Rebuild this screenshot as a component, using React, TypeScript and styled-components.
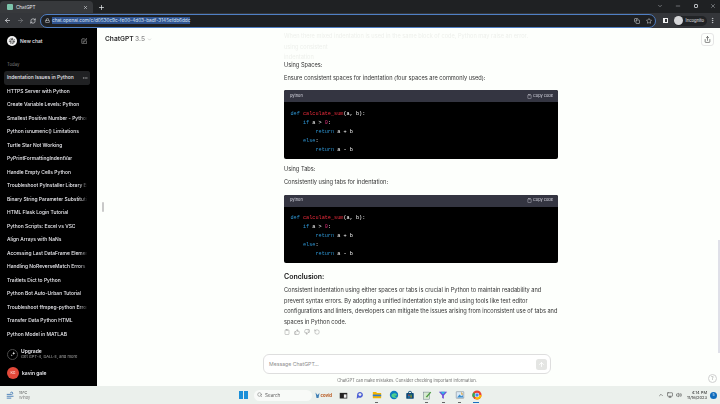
import styled, { createGlobalStyle } from "styled-components"
import {
  ArrowLeft,
  ArrowRight,
  ArrowUp,
  ChevronDown,
  ChevronUp,
  Clipboard,
  Copy,
  EllipsisVertical,
  Ellipsis,
  Lock,
  Minus,
  Monitor,
  Plus,
  RefreshCw,
  RotateCcw,
  Search,
  Share,
  SquarePen,
  Star,
  ThumbsDown,
  ThumbsUp,
  Volume2,
  X,
} from "lucide-react"

const GlobalStyle = createGlobalStyle`
  html, body {
    margin: 0;
    padding: 0;
    width: 720px;
    height: 404px;
    overflow: hidden;
    background: #fdfffc;
  }
  * {
    box-sizing: border-box;
  }
`

const Screen = styled.div`
  width: 720px;
  height: 404px;
  display: flex;
  flex-direction: column;
  overflow: hidden;
  font-family: Inter, "Liberation Sans", sans-serif;
  filter: blur(0.35px);
`

/* browser chrome */
const TabStrip = styled.div`
  height: 13px;
  flex: none;
  background: #1f2123;
  display: flex;
  align-items: flex-end;
  color: #e8eaed;
`

const Tab = styled.div`
  width: 93px;
  height: 12px;
  background: #37393c;
  border-radius: 4px 4px 0 0;
  display: flex;
  align-items: center;
  padding: 0 5px 0 7px;
  gap: 3px;
  font-size: 4.6px;
`

const Favicon = styled.span`
  width: 6px;
  height: 6px;
  border-radius: 1px;
  background: #7cc4ab;
  flex: none;
`

const TabTitle = styled.span`
  flex: 1;
`

const NewTab = styled.div`
  width: 15px;
  margin-left: 1px;
  height: 12px;
  display: flex;
  align-items: center;
  justify-content: center;
`

const WindowControls = styled.div`
  margin-left: auto;
  height: 11px;
  display: flex;
  align-items: center;
  gap: 12.5px;
  padding-right: 4px;
  align-self: flex-start;
  color: #b9bcc0;
`

const RestoreGlyph = styled.span`
  width: 4px;
  height: 4px;
  border: 1px solid #b9bcc0;
  border-radius: 1px;
`

const Toolbar = styled.div`
  height: 15px;
  flex: none;
  background: #34363a;
  display: flex;
  align-items: center;
  padding: 0 4px 0 4px;
  color: #dfe1e5;
`

const NavButtons = styled.div`
  display: flex;
  align-items: center;
  gap: 6px;
  width: 36px;
`

const Omnibox = styled.div`
  width: 616px;
  height: 14px;
  border: 1px solid #4f7fc4;
  border-radius: 7px;
  background: #1e2023;
  display: flex;
  align-items: center;
  padding: 0 3.5px 0 4px;
  gap: 2px;
`

const UrlText = styled.span`
  background: #2f5390;
  color: #dce6f5;
  font-size: 4.7px;
  line-height: 7px;
  white-space: nowrap;
`

const OmniIcons = styled.div`
  margin-left: auto;
  display: flex;
  align-items: center;
  gap: 6px;
`

const ToolbarRight = styled.div`
  flex: 1;
  display: flex;
  align-items: center;
  justify-content: flex-end;
  gap: 2px;
`

const SidePanelGlyph = styled.span`
  width: 5px;
  height: 5px;
  background: #34363a;
  border: 1px solid #f1f1f1;
  border-left-width: 2.5px;
  margin-right: 4px;
`

const IncognitoPill = styled.div`
  display: flex;
  align-items: center;
  gap: 3px;
  height: 10px;
  background: #212326;
  border-radius: 5px;
  font-size: 4.2px;
  color: #e8eaed;
  padding-right: 3px;
`

const IncognitoAvatar = styled.span`
  width: 9px;
  height: 9px;
  border-radius: 50%;
  background: #d6d7d9;
`

/* app */
const Body = styled.div`
  flex: 1;
  min-height: 0;
  display: flex;
`

const Sidebar = styled.aside`
  width: 97px;
  flex: none;
  background: #000;
  display: flex;
  flex-direction: column;
  color: #ececf1;
  padding: 6px 7px 0 4px;
`

const NewChatRow = styled.div`
  display: flex;
  align-items: center;
  height: 14px;
  padding: 0 3px;
  gap: 3px;
  font-size: 5px;
  font-weight: 500;
  margin-bottom: 14px;
`

const LogoCircle = styled.span`
  width: 10px;
  height: 10px;
  border-radius: 50%;
  background: #f3f3f3;
  display: flex;
  align-items: center;
  justify-content: center;
  flex: none;
`

const NewChatIcon = styled.span`
  margin-left: auto;
  display: flex;
  color: #c8c8c8;
`

const DayLabel = styled.div`
  font-size: 4.3px;
  color: #7f7f7f;
  padding: 0 3px;
  height: 6px;
  line-height: 6px;
  margin-bottom: 3px;
`

const ChatList = styled.div`
  display: flex;
  flex-direction: column;
`

const ChatItem = styled.div<{ $active?: boolean }>`
  height: 13.5px;
  line-height: 13.5px;
  padding: 0 3px;
  font-size: 4.95px;
  font-weight: 500;
  color: #ececf1;
  white-space: nowrap;
  position: relative;
  overflow: hidden;
  border-radius: 3px;
  background: ${(p) => (p.$active ? "#202123" : "transparent")};
  -webkit-mask-image: ${(p) =>
    p.$active ? "none" : "linear-gradient(to right, #000 88%, transparent 97%)"};
`

const ItemDots = styled.span`
  position: absolute;
  right: 0;
  top: 0;
  bottom: 0;
  width: 14px;
  display: flex;
  align-items: center;
  justify-content: flex-end;
  padding-right: 2px;
  background: linear-gradient(to right, transparent, #202123 35%);
  color: #b8b8b8;
`

const SidebarFooter = styled.div`
  margin-top: auto;
  padding: 0 3px 7px;
  display: flex;
  flex-direction: column;
  gap: 7px;
`

const UpgradeRow = styled.div`
  display: flex;
  align-items: center;
  gap: 3px;
`

const UpgradeBadge = styled.span`
  width: 11px;
  height: 11px;
  border-radius: 50%;
  border: 0.5px solid #4a4a4a;
  display: flex;
  align-items: center;
  justify-content: center;
  flex: none;
`

const UpgradeText = styled.div`
  display: flex;
  flex-direction: column;
  font-size: 5px;
  font-weight: 600;
  line-height: 6px;
`

const UpgradeSub = styled.span`
  font-size: 4.05px;
  font-weight: 400;
  color: #a8a8a8;
  white-space: nowrap;
`

const UserRow = styled.div`
  display: flex;
  align-items: center;
  gap: 3px;
  font-size: 5px;
  font-weight: 600;
`

const Avatar = styled.span`
  width: 12px;
  height: 12px;
  border-radius: 50%;
  background: #e2493a;
  color: #f8c8c0;
  font-size: 3.6px;
  display: flex;
  align-items: center;
  justify-content: center;
  flex: none;
`

const Main = styled.main`
  flex: 1;
  min-width: 0;
  position: relative;
  background: #fdfffc;
  display: flex;
  flex-direction: column;
`

const Header = styled.header`
  position: absolute;
  top: 0;
  left: 0;
  right: 0;
  height: 22px;
  display: flex;
  align-items: center;
  padding: 0 6px 0 8px;
  z-index: 2;
`

const ModelName = styled.div`
  font-size: 6.6px;
  font-weight: 600;
  color: #2a2a2a;
  display: flex;
  align-items: center;
  gap: 1.5px;
`

const ModelVersion = styled.span`
  color: #8a8a8a;
  font-weight: 500;
`

const ShareButton = styled.div`
  margin-left: auto;
  width: 13px;
  height: 13px;
  border: 0.5px solid #e6e6e6;
  border-radius: 3px;
  display: flex;
  align-items: center;
  justify-content: center;
  color: #333;
`

const SideHandle = styled.span`
  position: absolute;
  left: 5px;
  top: 174px;
  width: 2px;
  height: 10px;
  border-radius: 1px;
  background: #c9c9c9;
`

const ScrollThumb = styled.span`
  position: absolute;
  right: 0;
  top: 212px;
  width: 2.5px;
  height: 113px;
  background: #dfe0e8;
`

const Thread = styled.div`
  flex: 1;
  min-height: 0;
  overflow: hidden;
  padding: 3px 162px 0 187px;
  font-size: 5.65px;
  line-height: 10.6px;
  color: #333;
`

const FadedLine = styled.div<{ $height?: number }>`
  white-space: nowrap;
  height: ${(p) => p.$height ?? 10.6}px;
  color: #eef0ec;
`

const Para = styled.p<{ $gap?: number }>`
  margin: 0 0 ${(p) => p.$gap ?? 2}px;
  white-space: nowrap;
`

const CodeBlock = styled.div<{ $after?: number }>`
  height: 68.5px;
  background: #000;
  border-radius: 2px;
  overflow: hidden;
  margin: 7px 0 ${(p) => p.$after ?? 5.5}px;
`

const CodeHeader = styled.div`
  height: 12px;
  background: #343541;
  color: #d9d9e3;
  font-size: 3.9px;
  display: flex;
  align-items: center;
  justify-content: space-between;
  padding: 0 5px 0 6px;
`

const CopyLabel = styled.span`
  display: flex;
  align-items: center;
  gap: 1.5px;
`

const Code = styled.pre`
  margin: 0;
  padding: 7.5px 6.5px 0;
  font-family: "Liberation Mono", "DejaVu Sans Mono", monospace;
  font-size: 5.2px;
  line-height: 9.05px;
  color: #fff;
`

const Kw = styled.span`
  color: #2e95d3;
`

const Fn = styled.span`
  color: #f22c3d;
`

const Num = styled.span`
  color: #df3079;
`

const Heading = styled.h3`
  margin: 0 0 3.5px;
  font-size: 7px;
  line-height: 11px;
  font-weight: 600;
  color: #111;
`

const ActionRow = styled.div`
  display: flex;
  gap: 4px;
  margin-top: 2px;
  color: #9a9a9a;
`

const Composer = styled.div`
  flex: none;
  display: flex;
  flex-direction: column;
  align-items: stretch;
  padding-left: 166px;
  padding-right: 169px;
  position: relative;
`

const InputBox = styled.div`
  height: 20px;
  border: 0.75px solid #dedede;
  border-radius: 6px;
  display: flex;
  align-items: center;
  padding: 0 3px 0 5px;
  color: #8e8e8e;
  font-size: 5.2px;
  margin-bottom: 2px;
  background: #fff;
`

const SendButton = styled.span`
  margin-left: auto;
  width: 11px;
  height: 11px;
  background: #e4e5e3;
  border-radius: 2.5px;
  display: flex;
  align-items: center;
  justify-content: center;
  color: #fff;
`

const Disclaimer = styled.div`
  font-size: 4.15px;
  color: #6e6e6e;
  line-height: 10px;
  text-align: center;
  white-space: nowrap;
`

const HelpButton = styled.span`
  position: absolute;
  right: 3px;
  bottom: 3px;
  width: 9px;
  height: 9px;
  border-radius: 50%;
  border: 0.5px solid #cfcfcf;
  color: #8a8a8a;
  font-size: 4.5px;
  display: flex;
  align-items: center;
  justify-content: center;
`

/* windows taskbar */
const Taskbar = styled.footer`
  height: 18px;
  flex: none;
  background: #ebf0ec;
  display: grid;
  grid-template-columns: 233px 1fr auto;
  align-items: center;
  padding: 0 3px 0 6px;
`

const Weather = styled.div`
  display: flex;
  align-items: center;
  gap: 4px;
`

const WeatherText = styled.div`
  font-size: 3.7px;
  line-height: 5.5px;
  color: #333;
`

const WeatherSub = styled.div`
  color: #777;
`

const TaskIcons = styled.div`
  display: flex;
  align-items: center;
`

const WinLogo = styled.span`
  display: grid;
  grid-template-columns: 4px 4px;
  grid-template-rows: 4px 4px;
  gap: 0.5px;
  margin-right: 6px;
`

const WinPane = styled.i`
  background: #1b8fd8;
`

const SearchPill = styled.div`
  width: 58px;
  height: 11px;
  border-radius: 6px;
  background: #f8faf8;
  display: flex;
  align-items: center;
  padding-left: 3px;
  gap: 3px;
  font-size: 4.6px;
  color: #666;
`

const CovidBadge = styled.span`
  width: 20px;
  margin: 0 1px 0 3px;
  display: flex;
  align-items: center;
  gap: 1px;
  font-size: 4.3px;
  font-weight: 700;
  color: #b8561c;
  white-space: nowrap;
`

const AppSlot = styled.span<{ $mark?: "grey" | "blue" }>`
  width: 16.6px;
  height: 16px;
  display: flex;
  align-items: center;
  justify-content: center;
  position: relative;
  &::after {
    content: "";
    display: ${(p) => (p.$mark ? "block" : "none")};
    position: absolute;
    bottom: 0;
    left: ${(p) => (p.$mark === "blue" ? 5 : 6.5)}px;
    width: ${(p) => (p.$mark === "blue" ? 6 : 3)}px;
    height: 1px;
    background: ${(p) => (p.$mark === "blue" ? "#1b6fc0" : "#666")};
  }
`

const Tray = styled.div`
  display: flex;
  align-items: center;
  gap: 3px;
  color: #333;
`

const Clock = styled.div`
  font-size: 4px;
  line-height: 5.5px;
  text-align: right;
  color: #222;
  margin-left: 2px;
`

const NoticeBadge = styled.span`
  width: 7px;
  height: 7px;
  border-radius: 50%;
  background: #0f6cbd;
  color: #fff;
  font-size: 3.4px;
  display: flex;
  align-items: center;
  justify-content: center;
`

const chats = [
  "Indentation Issues in Python",
  "HTTPS Server with Python",
  "Create Variable Levels: Python",
  "Smallest Positive Number - Python",
  "Python isnumeric() Limitations",
  "Turtle Star Not Working",
  "PyPrintFormattingIndentVar",
  "Handle Empty Cells Python",
  "Troubleshoot PyInstaller Library Error",
  "Binary String Parameter Substitution",
  "HTML Flask Login Tutorial",
  "Python Scripts: Excel vs VSC",
  "Align Arrays with NaNs",
  "Accessing Last DataFrame Element",
  "Handling NoReverseMatch Errors",
  "Traitlets Dict to Python",
  "Python Bot Auto-Urban Tutorial",
  "Troubleshoot ffmpeg-python Error",
  "Transfer Data Python HTML",
  "Python Model in MATLAB",
]

const SampleCode = () => (
  <Code>
    <Kw>def</Kw> <Fn>calculate_sum</Fn>(a, b):{"\n"}
    {"    "}<Kw>if</Kw> a &gt; <Num>0</Num>:{"\n"}
    {"        "}<Kw>return</Kw> a + b{"\n"}
    {"    "}<Kw>else</Kw>:{"\n"}
    {"        "}<Kw>return</Kw> a - b
  </Code>
)

const PythonBlock = ({ after }: { after?: number }) => (
  <CodeBlock $after={after}>
    <CodeHeader>
      <span>python</span>
      <CopyLabel>
        <Clipboard size={5} strokeWidth={2} />
        Copy code
      </CopyLabel>
    </CodeHeader>
    <SampleCode />
  </CodeBlock>
)

const ChatLogo = () => (
  <svg width="8" height="8" viewBox="0 0 24 24" fill="none" stroke="#333" strokeWidth="2.4">
    <circle cx="12" cy="12" r="8" strokeDasharray="5 2" />
    <path d="M12 5l6 10H6z" />
  </svg>
)

const AppIcons = () => (
  <>
    <AppSlot>
      <svg width="9" height="9" viewBox="0 0 24 24"><rect x="2" y="5" width="20" height="15" fill="#222" /><rect x="13" y="9" width="7" height="9" fill="#eee" /></svg>
    </AppSlot>
    <AppSlot>
      <svg width="10" height="10" viewBox="0 0 24 24"><path d="M5 12a7 7 0 1 1 4 6l-5 3z" fill="#4c5fd5" /><circle cx="12" cy="11" r="3.5" fill="#ebf0ec" /></svg>
    </AppSlot>
    <AppSlot $mark="grey">
      <svg width="10" height="10" viewBox="0 0 24 24"><path d="M2 5h8l2 2h10v13H2z" fill="#f4b400" /><rect x="2" y="11" width="20" height="4" fill="#2d7dd2" /></svg>
    </AppSlot>
    <AppSlot>
      <svg width="10" height="10" viewBox="0 0 24 24"><circle cx="12" cy="12" r="10" fill="#0f7bbf" /><path d="M6 15a7 6 0 0 1 13-4c0 4-6 3-6 1 0 4 4 6 8 4a10 10 0 0 1-15-1z" fill="#4fd18b" /></svg>
    </AppSlot>
    <AppSlot>
      <svg width="10" height="10" viewBox="0 0 24 24"><rect x="3" y="7" width="18" height="14" rx="2" fill="#0c4a78" /><path d="M8 7a4 4 0 0 1 8 0" fill="none" stroke="#0c4a78" strokeWidth="2" /><rect x="8" y="11" width="3" height="3" fill="#e9573f" /><rect x="13" y="11" width="3" height="3" fill="#7fc241" /><rect x="8" y="15" width="3" height="3" fill="#2f9ee0" /><rect x="13" y="15" width="3" height="3" fill="#f4b400" /></svg>
    </AppSlot>
    <AppSlot $mark="grey">
      <svg width="10" height="10" viewBox="0 0 24 24"><rect x="4" y="5" width="14" height="17" fill="#d7ead2" stroke="#567" /><path d="M9 16l11-12 2 2-10 12z" fill="#4c9a3f" /></svg>
    </AppSlot>
    <AppSlot $mark="grey">
      <svg width="10" height="10" viewBox="0 0 24 24"><path d="M2 4h20l-8 9v8l-4-2v-6z" fill="#6d4bd8" /><path d="M6 4h12l-5 6h-2z" fill="#34b6e4" /></svg>
    </AppSlot>
    <AppSlot $mark="grey">
      <svg width="10" height="10" viewBox="0 0 24 24"><rect x="3" y="4" width="18" height="16" rx="1" fill="#dbe9f5" stroke="#567" /><path d="M5 18l6-7 4 4 3-3 2 6z" fill="#3c8dcc" /><path d="M14 4l6 6-4 2z" fill="#d9a441" /></svg>
    </AppSlot>
    <AppSlot $mark="blue">
      <svg width="10" height="10" viewBox="0 0 24 24">
        <circle cx="12" cy="12" r="11" fill="#ea4335" />
        <path d="M12 12L2.5 18A11 11 0 0 1 3 6z" fill="#34a853" />
        <path d="M12 23A11 11 0 0 0 23 12H12l-5 9z" fill="#fbbc05" />
        <circle cx="12" cy="12" r="5.5" fill="#fff" />
        <circle cx="12" cy="12" r="4.2" fill="#4285f4" />
      </svg>
    </AppSlot>
  </>
)

export default function App() {
  return (
    <Screen>
      <GlobalStyle />
      <TabStrip>
        <Tab>
          <Favicon />
          <TabTitle>ChatGPT</TabTitle>
          <X size={5} strokeWidth={2.5} />
        </Tab>
        <NewTab>
          <Plus size={7} strokeWidth={2.5} />
        </NewTab>
        <WindowControls>
          <ChevronDown size={6} />
          <Minus size={6} />
          <RestoreGlyph />
          <X size={6} />
        </WindowControls>
      </TabStrip>
      <Toolbar>
        <NavButtons>
          <ArrowLeft size={7} strokeWidth={2.5} />
          <ArrowRight size={7} color="#85878a" />
          <RefreshCw size={6} strokeWidth={2.5} />
        </NavButtons>
        <Omnibox>
          <Lock size={5} strokeWidth={2.5} />
          <UrlText>chat.openai.com/c/d0530c9c-fe00-4d03-badf-3145efdb6ddc</UrlText>
          <OmniIcons>
            <Copy size={6} />
            <Star size={6} />
          </OmniIcons>
        </Omnibox>
        <ToolbarRight>
          <SidePanelGlyph />
          <IncognitoPill>
            <IncognitoAvatar />
            Incognito
          </IncognitoPill>
          <EllipsisVertical size={7} />
        </ToolbarRight>
      </Toolbar>
      <Body>
        <Sidebar>
          <NewChatRow>
            <LogoCircle>
              <ChatLogo />
            </LogoCircle>
            New chat
            <NewChatIcon>
              <SquarePen size={6.5} />
            </NewChatIcon>
          </NewChatRow>
          <DayLabel>Today</DayLabel>
          <ChatList>
            {chats.map((title, i) => (
              <ChatItem key={title} $active={i === 0}>
                {title}
                {i === 0 && (
                  <ItemDots>
                    <Ellipsis size={6} />
                  </ItemDots>
                )}
              </ChatItem>
            ))}
          </ChatList>
          <SidebarFooter>
            <UpgradeRow>
              <UpgradeBadge>
                <svg width="6" height="6" viewBox="0 0 24 24" fill="#fff">
                  <path d="M15 2l1.5 5L21 9l-4.5 2L15 16l-1.5-5L9 9l4.5-2zM7 13l1 3 3 1-3 1-1 3-1-3-3-1 3-1z" />
                </svg>
              </UpgradeBadge>
              <UpgradeText>
                Upgrade
                <UpgradeSub>Get GPT-4, DALL·E, and more</UpgradeSub>
              </UpgradeText>
            </UpgradeRow>
            <UserRow>
              <Avatar>KG</Avatar>
              kavin gale
            </UserRow>
          </SidebarFooter>
        </Sidebar>
        <Main>
          <Header>
            <ModelName>
              ChatGPT <ModelVersion>3.5</ModelVersion>
              <ChevronDown size={5} color="#aaa" />
            </ModelName>
            <ShareButton>
              <Share size={7} />
            </ShareButton>
          </Header>
          <SideHandle />
          <ScrollThumb />
          <Thread>
            <FadedLine>When there mixed indentation is used in the same block of code, Python may raise an error.</FadedLine>
            <FadedLine>using consistent</FadedLine>
            <FadedLine $height={8}>indentation</FadedLine>
            <Para $gap={2}>Using Spaces:</Para>
            <Para $gap={0}>Ensure consistent spaces for indentation (four spaces are commonly used):</Para>
            <PythonBlock />
            <Para $gap={2}>Using Tabs:</Para>
            <Para $gap={0}>Consistently using tabs for indentation:</Para>
            <PythonBlock after={7.5} />
            <Heading>Conclusion:</Heading>
            <Para $gap={0}>Consistent indentation using either spaces or tabs is crucial in Python to maintain readability and</Para>
            <Para $gap={0}>prevent syntax errors. By adopting a unified indentation style and using tools like text editor</Para>
            <Para $gap={0}>configurations and linters, developers can mitigate the issues arising from inconsistent use of tabs and</Para>
            <Para $gap={0}>spaces in Python code.</Para>
            <ActionRow>
              <Clipboard size={6} />
              <ThumbsUp size={6} />
              <ThumbsDown size={6} />
              <RotateCcw size={6} />
            </ActionRow>
          </Thread>
          <Composer>
            <InputBox>
              Message ChatGPT…
              <SendButton>
                <ArrowUp size={7} strokeWidth={3} />
              </SendButton>
            </InputBox>
            <Disclaimer>ChatGPT can make mistakes. Consider checking important information.</Disclaimer>
            <HelpButton>?</HelpButton>
          </Composer>
        </Main>
      </Body>
      <Taskbar>
        <Weather>
          <svg width="9" height="9" viewBox="0 0 24 24" fill="none" stroke="#4a7fb8" strokeWidth="2.5">
            <path d="M2 9h13a3 3 0 1 0-3-3M2 14h18M2 19h12" />
          </svg>
          <WeatherText>
            15°C
            <WeatherSub>Windy</WeatherSub>
          </WeatherText>
        </Weather>
        <TaskIcons>
          <WinLogo>
            <WinPane />
            <WinPane />
            <WinPane />
            <WinPane />
          </WinLogo>
          <SearchPill>
            <Search size={5.5} />
            Search
          </SearchPill>
          <CovidBadge>
            <svg width="5" height="7" viewBox="0 0 10 14">
              <path d="M1 1l4 5 4-4-2 10H3z" fill="#3f7fb5" />
            </svg>
            covid
          </CovidBadge>
          <AppIcons />
        </TaskIcons>
        <Tray>
          <ChevronUp size={6} />
          <Monitor size={6} />
          <Volume2 size={6} />
          <Clock>
            4:14 PM
            <br />
            11/16/2023
          </Clock>
          <NoticeBadge>5</NoticeBadge>
        </Tray>
      </Taskbar>
    </Screen>
  )
}
